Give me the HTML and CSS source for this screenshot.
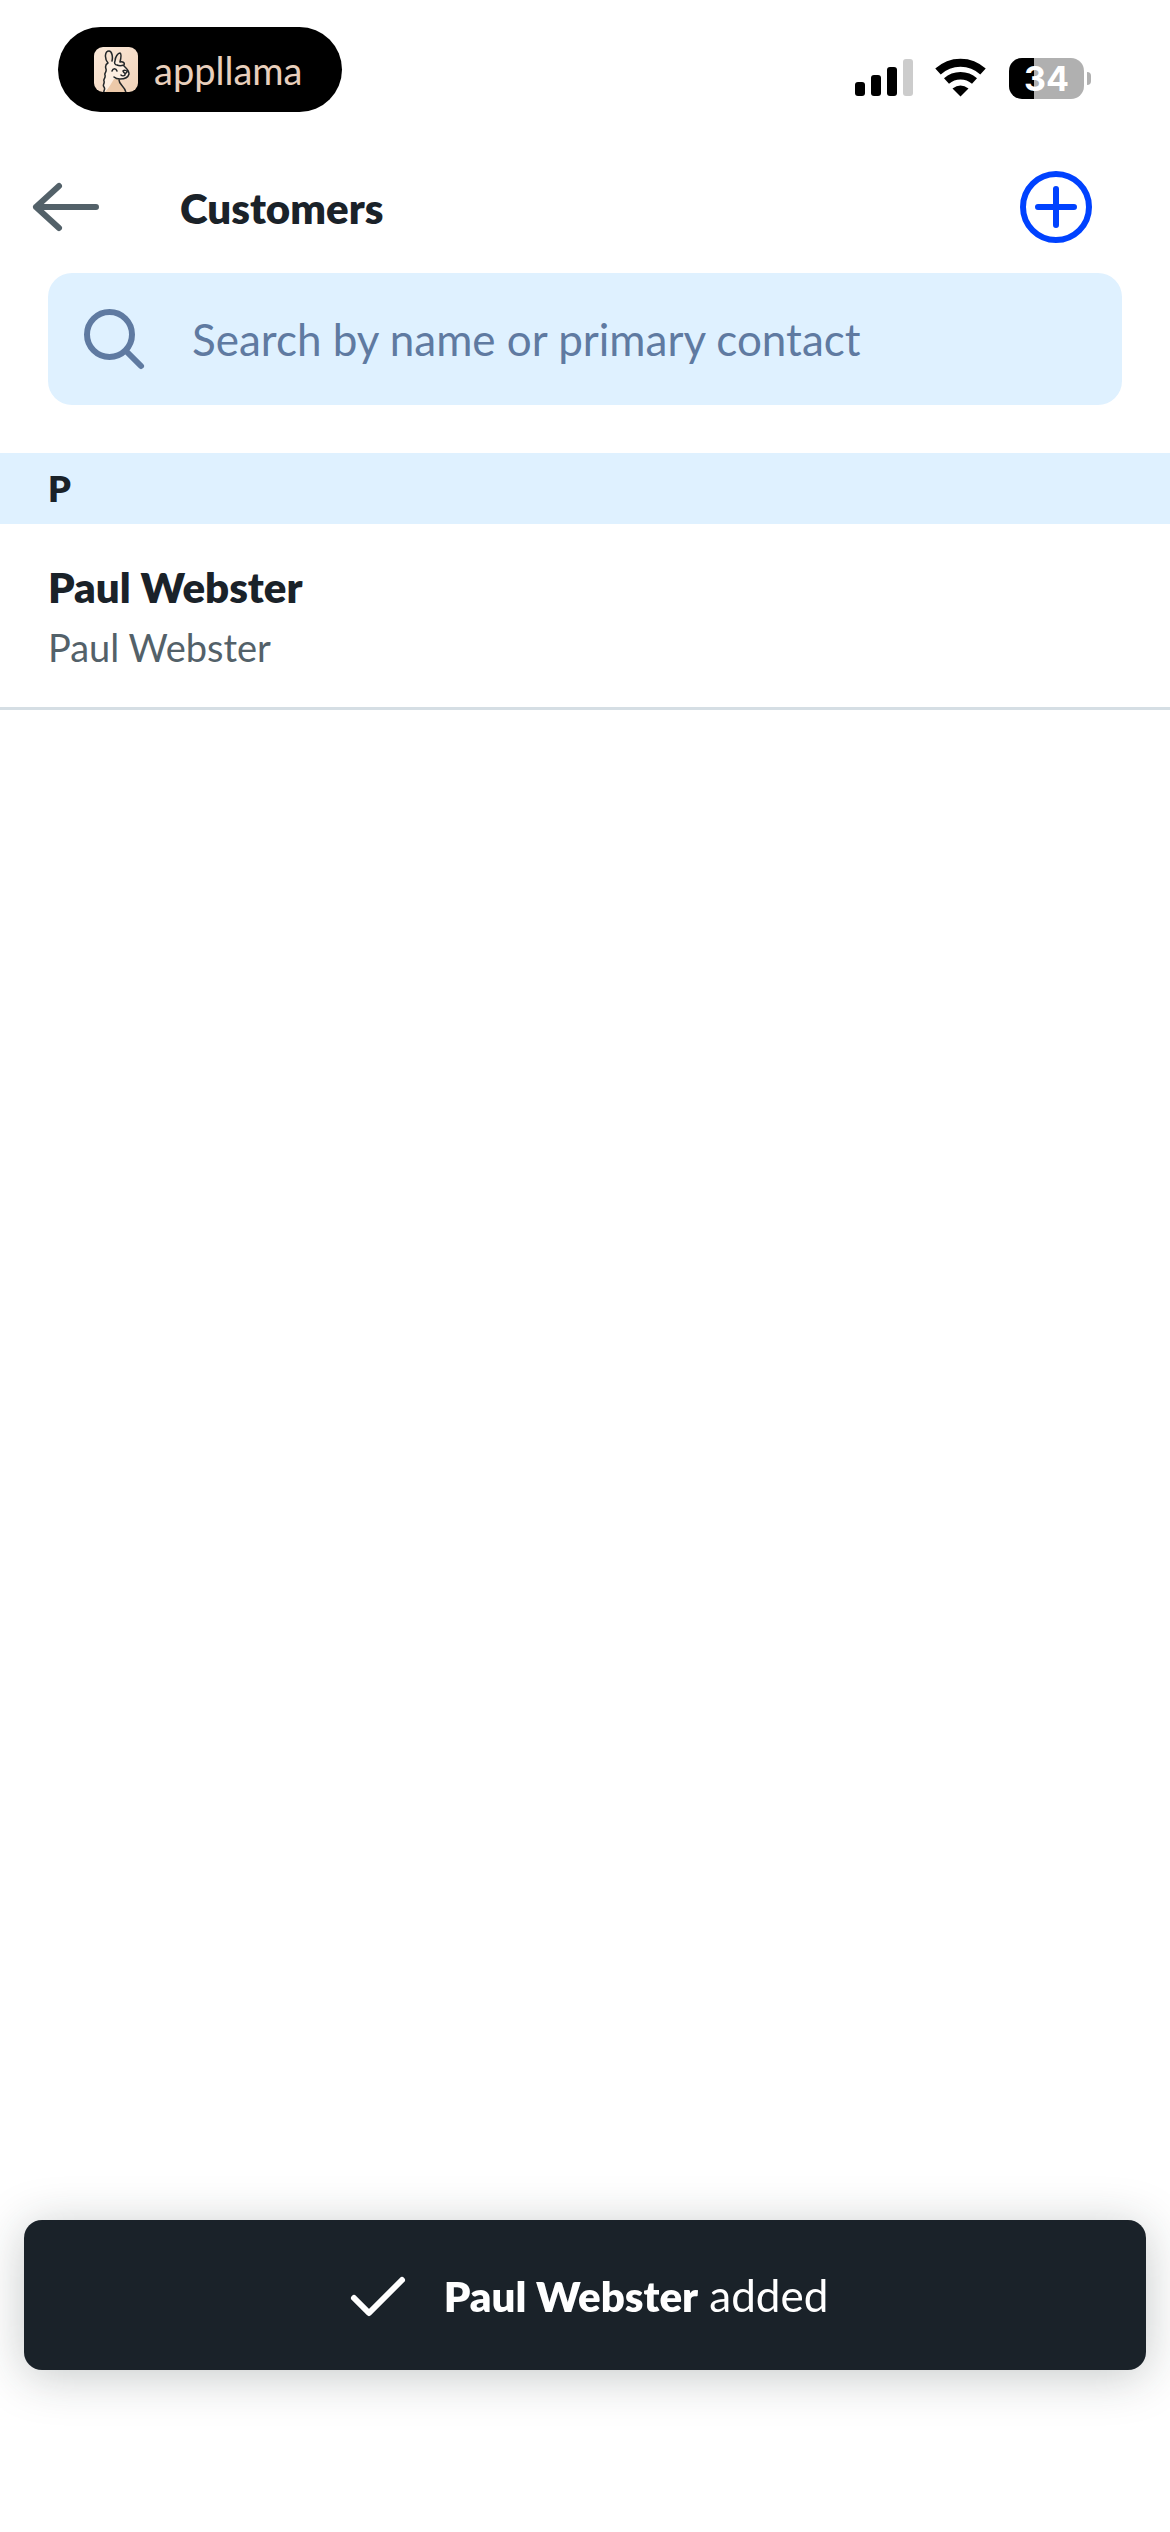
FILE: index.html
```html
<!DOCTYPE html>
<html lang="en">
<head>
<meta charset="utf-8">
<meta name="viewport" content="width=device-width, initial-scale=1">
<title>Customers</title>
<link rel="stylesheet" href="styles.css">
</head>
<body>
<div class="screen">
  <div class="status-bar">
    <div class="island">
      <svg class="island-logo" viewBox="0 0 44 45" aria-hidden="true">
        <defs>
          <linearGradient id="tile" x1="0" y1="0" x2="1" y2="1">
            <stop offset="0" stop-color="#fbe9da"/>
            <stop offset="1" stop-color="#f0d2b8"/>
          </linearGradient>
          <clipPath id="tile-clip"><rect width="44" height="45" rx="9"/></clipPath>
        </defs>
        <g clip-path="url(#tile-clip)">
          <rect width="44" height="45" fill="url(#tile)"/>
          <path d="M10 46c-1-3 1-4 0-6s1-4 0-6 1-4 1-6 2-3 1-6c-1-2 0-5 2-6l8-4 8 7 5 6c2 6-5 8-10 8l2 13z" fill="#fdeee1"/>
          <path d="M20 32c-3 5-5 9-10 14h22c-1-6-5-8-6-14z" fill="#ecc9a9"/>
          <path d="M10 46c-1-3 2-3 0-6-2-2 1-3 0-6-1-2 2-3 1-6-1-2 2-3 1-6-1-3 0-5 2-6-4-5-3-12 1-12 3 0 4 6 3 10M21 14c0-4 3-8 5-8 2 1 1 5 0 9M21 14c-1 2 0 4 2 4 2 1 4 1 7 0 1-2-1-4-4-3M30 19c2 2 5 4 5 8-1 4-5 5-9 5-3 0-5-1-6-2M25 33c0 5 6 6 7 13M18 24c1-3 4-3 5 0M29 24c1-1 4-1 4 1-1 2-3 2-4-1M31 26v2c-1 1-3 1-4 0" fill="none" stroke="#222629" stroke-width="1.5" stroke-linecap="round" stroke-linejoin="round"/>
        </g>
      </svg>
      <span class="island-name">appllama</span>
    </div>
    <div class="status-icons">
      <svg class="signal" viewBox="0 0 58 42" aria-label="Signal">
        <rect x="0" y="25" width="10" height="14" rx="3"/>
        <rect x="16" y="18" width="10" height="21" rx="3"/>
        <rect x="32" y="10" width="10" height="29" rx="3"/>
        <rect x="48" y="2" width="10" height="37" rx="3" fill="#ccc"/>
      </svg>
      <svg class="wifi" viewBox="0 0 52 42" aria-label="Wi-Fi">
        <path d="M3 14.500a33 33 0 0 1 45 0" fill="none" stroke="#000" stroke-width="8"/>
        <path d="M11.500 24a21 21 0 0 1 28 0" fill="none" stroke="#000" stroke-width="7.500"/>
        <path d="M25.500 39.500l-8-8q8-6 16 0z"/>
      </svg>
      <div class="battery"><span class="battery-level">34</span></div>
    </div>
  </div>

  <header class="app-bar">
    <button class="icon-button" type="button" aria-label="Back">
      <svg class="back-icon" viewBox="0 0 72 72" aria-hidden="true"><path d="M66 36H6M29 15L6 36l23 21"/></svg>
    </button>
    <h1 class="title">Customers</h1>
    <button class="icon-button" type="button" aria-label="Add customer">
      <svg class="add-icon" viewBox="0 0 72 72" aria-hidden="true"><circle cx="36" cy="36" r="33"/><path d="M36 18v36M18 36h36"/></svg>
    </button>
  </header>

  <main>
    <label class="search">
      <svg class="search-icon" viewBox="0 0 72 72" aria-hidden="true"><circle cx="31.500" cy="31.500" r="22.500"/><path d="M48 48l15 15"/></svg>
      <input class="search-input" type="search" aria-label="Search customers" placeholder="Search by name or primary contact">
    </label>
    <section>
      <h2 class="section-title">P</h2>
      <ul class="customers">
        <li><a class="customer" href="#">
          <span class="customer-name">Paul Webster</span>
          <span class="customer-contact">Paul Webster</span>
        </a></li>
      </ul>
    </section>
  </main>

  <div class="toast" role="status">
    <svg class="check-icon" viewBox="0 0 72 72" aria-hidden="true"><path d="M12 39l15 15 33-33"/></svg>
    <p class="toast-text"><strong>Paul Webster</strong> added</p>
  </div>
</div>
</body>
</html>
```
FILE: styles.css
```css
* { box-sizing: border-box; }

body {
  margin: 0;
  background: #fff;
  color: #1a2229;
  font-family: Lato, "Liberation Sans", sans-serif;
  font-size: 42px;
  line-height: 54px;
}

svg { display: block; flex: none; }

.screen { min-height: 100vh; }

/* Status bar */
.status-bar {
  display: flex;
  justify-content: space-between;
  align-items: flex-start;
  height: 141px;
  padding: 27px 79px 0 58px;
}

.island {
  display: flex;
  align-items: center;
  gap: 16px;
  width: 284px;
  height: 85px;
  padding: 0 36px;
  border-radius: 43px;
  background: #000;
  color: #e8cfbc;
}

.island-logo { width: 44px; height: 45px; }

.island-name { font-size: 38px; line-height: 48px; }

.status-icons {
  display: flex;
  align-items: center;
  gap: 22px;
  margin-top: 30px;
}

.signal { width: 58px; height: 42px; }
.wifi { width: 52px; height: 42px; }

.battery {
  display: flex;
  align-items: center;
  gap: 3px;
}

.battery::after {
  content: "";
  width: 4px;
  height: 13px;
  border-radius: 0 6px 6px 0;
  background: #b0b0b0;
}

.battery-level {
  width: 75px;
  height: 41px;
  border-radius: 13px;
  background: linear-gradient(to right, #000 34%, #b0b0b0 34%);
  color: #fff;
  font: bold 34px/41px Inter, "Liberation Sans", sans-serif;
  text-align: center;
}

/* App bar */
.app-bar {
  display: flex;
  align-items: center;
  height: 132px;
  padding: 0 78px 0 30px;
}

.icon-button {
  padding: 0;
  border: 0;
  background: none;
}

.back-icon,
.add-icon,
.search-icon,
.check-icon {
  width: 72px;
  height: 72px;
  fill: none;
  stroke-width: 6px;
  stroke-linecap: round;
  stroke-linejoin: round;
}

.back-icon { stroke: #536169; }
.add-icon { stroke: #0042ff; }
.search-icon { stroke: #5f7aa1; }
.check-icon { stroke: #fff; }

.title {
  flex: 1;
  margin: 0;
  padding: 2px 0 0 78px;
  font-size: 42px;
  font-weight: 800;
}

/* Search */
.search {
  display: flex;
  align-items: center;
  gap: 42px;
  height: 132px;
  margin: 0 48px 48px;
  padding: 0 30px;
  border-radius: 24px;
  background: #dff1ff;
}

.search-input {
  flex: 1;
  min-width: 0;
  padding: 0;
  border: 0;
  outline: 0;
  background: none;
  color: #1a2229;
  font: inherit;
  font-size: 44px;
}

.search-input::placeholder { color: #5f7aa1; opacity: 1; }

/* Customer list */
.section-title {
  margin: 0;
  padding: 12px 48px;
  background: #dff1ff;
  font-size: 36px;
  font-weight: 800;
  line-height: 47px;
}

.customers {
  margin: 0;
  padding: 0;
  list-style: none;
}

.customer {
  display: flex;
  flex-direction: column;
  gap: 8px;
  padding: 36px 48px 34px;
  border-bottom: 3px solid #d5dee4;
  color: inherit;
  text-decoration: none;
}

.customer-name { font-weight: 800; }

.customer-contact {
  color: #536169;
  font-size: 38px;
  line-height: 51px;
}

/* Toast */
.toast {
  position: fixed;
  right: 24px;
  bottom: 162px;
  left: 24px;
  display: flex;
  align-items: center;
  justify-content: center;
  gap: 30px;
  height: 150px;
  border-radius: 18px;
  background: #1a2229;
  box-shadow: 0 6px 48px rgba(26, 40, 40, 0.25);
  color: #fff;
}

.toast-text { margin: 0; font-size: 44px; }
.toast-text strong { font-size: 42px; font-weight: 800; }
```
